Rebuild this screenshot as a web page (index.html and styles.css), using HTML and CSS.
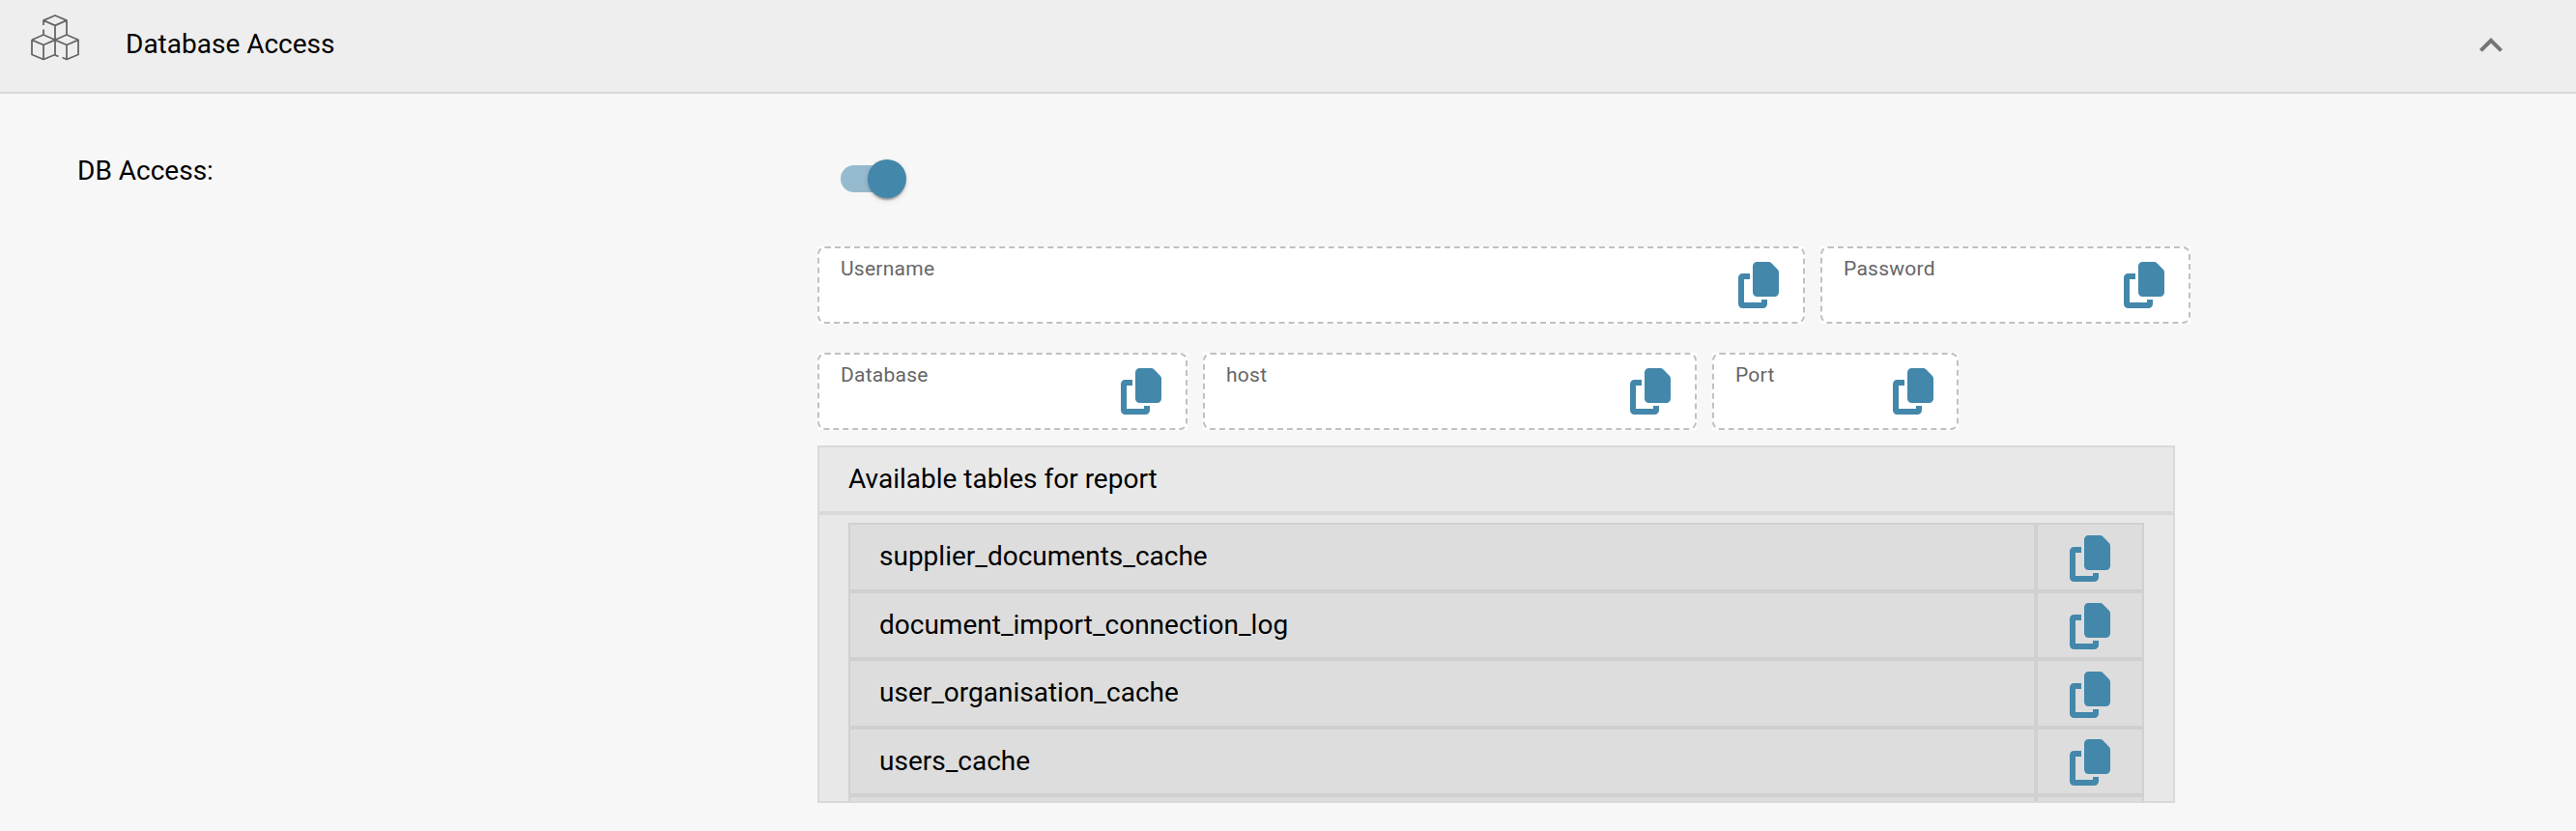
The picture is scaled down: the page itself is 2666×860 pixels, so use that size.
FILE: index.html
```html
<!DOCTYPE html>
<html lang="en">
<head>
<meta charset="utf-8">
<title>Database Access</title>
<link rel="stylesheet" href="styles.css">
</head>
<body>
<svg class="defs" width="0" height="0">
  <symbol id="copy" viewBox="0 0 448 512"><path d="M208 0L332.1 0c12.7 0 24.9 5.1 33.9 14.1l67.9 67.9c9 9 14.1 21.2 14.1 33.9L448 336c0 26.5-21.5 48-48 48l-192 0c-26.5 0-48-21.5-48-48l0-288c0-26.5 21.5-48 48-48zM48 128l80 0 0 64-64 0 0 256 192 0 0-32 64 0 0 48c0 26.5-21.5 48-48 48L48 512c-26.5 0-48-21.5-48-48L0 176c0-26.5 21.5-48 48-48z"/></symbol>
</svg>
<header class="panel-header">
  <svg class="cubes" viewBox="0 0 50 48">
    <path d="M13 11V6.2L25 1l12 5.2V21M13 6.2l12 5.2 12-5.2M25 11.4V42l3.5 1.4M13 15.5V21M1 26.3L13 21l12 5.3 12-5.3 12 5.3V41.5L37 46.5l-4.5-2M1 26.3V41.5L13 46.5l12-5M1 26.3l12 5.2 12-5.2 12 5.2 12-5.2M13 31.5v15M37 31.5v15"/>
  </svg>
  <h1 class="panel-title">Database Access</h1>
  <svg class="chevron" viewBox="0 0 24 15"><path d="M12 0L24 12l-2.820 2.820L12 5.640 2.820 14.820 0 12z"/></svg>
</header>
<main class="panel-body">
  <div class="row-label">DB Access:</div>
  <div class="content">
    <div class="toggle"><span class="thumb"></span></div>
    <div class="fields">
      <div class="field w80"><span class="label">Username</span><svg class="copy"><use href="#copy"/></svg></div>
      <div class="field w30"><span class="label">Password</span><svg class="copy"><use href="#copy"/></svg></div>
    </div>
    <div class="fields">
      <div class="field w30"><span class="label">Database</span><svg class="copy"><use href="#copy"/></svg></div>
      <div class="field w40"><span class="label">host</span><svg class="copy"><use href="#copy"/></svg></div>
      <div class="field w20"><span class="label">Port</span><svg class="copy"><use href="#copy"/></svg></div>
    </div>
    <section class="tables">
      <h2 class="tables-title">Available tables for report</h2>
      <div class="tables-scroll">
        <div class="table-row"><div class="name">supplier_documents_cache</div><div class="action"><svg class="copy"><use href="#copy"/></svg></div></div>
        <div class="table-row"><div class="name">document_import_connection_log</div><div class="action"><svg class="copy"><use href="#copy"/></svg></div></div>
        <div class="table-row"><div class="name">user_organisation_cache</div><div class="action"><svg class="copy"><use href="#copy"/></svg></div></div>
        <div class="table-row"><div class="name">users_cache</div><div class="action"><svg class="copy"><use href="#copy"/></svg></div></div>
        <div class="table-row"><div class="name"></div><div class="action"></div></div>
      </div>
    </section>
  </div>
</main>
</body>
</html>
```
FILE: styles.css
```css
* { box-sizing: border-box; }
body {
  margin: 0;
  height: 860px;
  overflow: hidden;
  background: #f7f7f7;
  color: #000;
  font: 28px/32px Roboto, sans-serif;
}
h1, h2 { margin: 0; font: inherit; }
.defs { display: block; }
.panel-header {
  display: flex;
  align-items: flex-start;
  height: 97px;
  padding: 15px 76px 0 32px;
  background: #eee;
  border-bottom: 2px solid #d9d9d9;
}
.cubes { width: 50px; height: 48px; fill: none; stroke: #666; stroke-width: 1.8; stroke-linejoin: round; }
.panel-title { flex: 1; margin: 15px 0 0 48px; }
.chevron { width: 24px; height: 15px; margin-top: 24px; fill: #757575; }
.panel-body { display: grid; grid-template-columns: 766px 1421px; padding: 63px 0 0 80px; }
.row-label { padding-top: 1px; }
.toggle {
  width: 66px;
  height: 28px;
  margin: 11px 0 56px 24px;
  border-radius: 14px;
  background: #96bace;
}
.thumb {
  display: block;
  position: relative;
  top: -6px;
  left: 28px;
  width: 40px;
  height: 40px;
  border-radius: 50%;
  background: #4387ab;
  box-shadow: 0 4px 2px -2px rgba(0,0,0,.2), 0 2px 2px rgba(0,0,0,.14), 0 2px 6px rgba(0,0,0,.12);
}
.fields { display: flex; gap: 16px; margin-bottom: 30px; }
.fields + .fields { margin-bottom: 16px; }
.field {
  position: relative;
  display: flex;
  justify-content: space-between;
  height: 80px;
  padding: 11px 27px 0 24px;
  background: #fff;
  color: #666;
  font-size: 21px;
  line-height: 24px;
  letter-spacing: .25px;
}
.field::before {
  content: "";
  position: absolute;
  inset: 0;
  border: 2px dashed #c1c1c1;
  border-radius: 8px;
}
.field .copy { margin-top: 5px; }
.w80 { width: 1022px; }
.w40 { width: 511px; }
.w30 { width: 383px; }
.w20 { width: 255px; }
.copy { display: block; width: 42px; height: 48px; fill: #4387ab; }
.w20 .copy { margin-right: -1px; }
.tables {
  width: 1405px;
  height: 370px;
  border: 2px solid #d9d9d9;
  background: #e8e8e8;
  overflow: hidden;
}
.tables-title { height: 70px; padding: 17px 30px 0; border-bottom: 4px solid #d9d9d9; }
.tables-scroll { width: 1341px; margin: 8px 0 0 30px; border-top: 2px solid #d0d0d0; }
.table-row {
  display: grid;
  grid-template-columns: 1fr 112px;
  height: 71px;
  border: solid #d0d0d0;
  border-width: 0 2px 4px;
  background: #ddd;
}
.table-row:nth-child(even) { height: 70px; }
.name { padding: 17px 30px 0; }
.action { border-left: 4px solid #d0d0d0; padding: 11px 0 0 33px; }
.table-row:nth-child(even) .action { padding-top: 10px; }
```
